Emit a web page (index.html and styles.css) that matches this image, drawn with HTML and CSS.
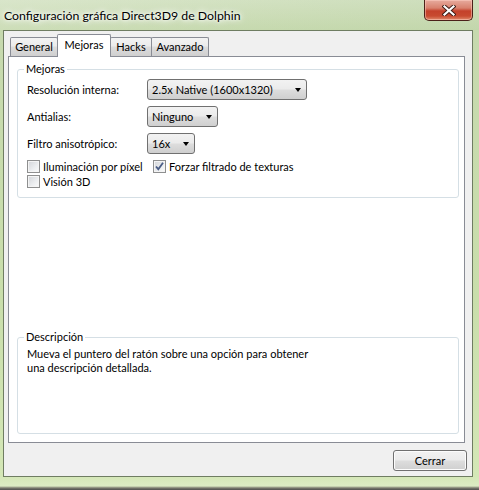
FILE: index.html
```html
<!DOCTYPE html>
<html lang="es">
<head>
<meta charset="utf-8">
<title>Configuración gráfica Direct3D9 de Dolphin</title>
<link rel="stylesheet" href="styles.css">
</head>
<body>
<div class="window">
  <div class="titlebar">
    <span class="title">Configuración gráfica Direct3D9 de Dolphin</span>
    <div class="close">
      <svg width="14" height="11" viewBox="0 0 14 11">
        <path d="M2.5 1.5 L11.5 9.5 M11.5 1.5 L2.5 9.5" stroke="#3a1a14" stroke-width="4" stroke-linecap="square" fill="none"/>
        <path d="M2.5 1.5 L11.5 9.5 M11.5 1.5 L2.5 9.5" stroke="#ffffff" stroke-width="2.2" stroke-linecap="square" fill="none"/>
      </svg>
    </div>
  </div>
  <div class="client">
    <div class="tabs">
      <div class="tab tab-general">General</div>
      <div class="tab tab-mejoras active">Mejoras</div>
      <div class="tab tab-hacks">Hacks</div>
      <div class="tab tab-avanzado">Avanzado</div>
    </div>
    <div class="panel">
      <fieldset class="group group-main">
        <legend>Mejoras</legend>
        <div class="row">
          <span class="label">Resolución interna:</span>
          <div class="combo combo-wide"><span>2.5x Native (1600x1320)</span><i class="arrow"></i></div>
        </div>
        <div class="row">
          <span class="label">Antialias:</span>
          <div class="combo combo-mid"><span>Ninguno</span><i class="arrow"></i></div>
        </div>
        <div class="row">
          <span class="label">Filtro anisotrópico:</span>
          <div class="combo combo-small"><span>16x</span><i class="arrow"></i></div>
        </div>
        <div class="checks">
          <div class="check check-first"><span class="box"></span><span>Iluminación por píxel</span></div>
          <div class="check"><span class="box">
            <svg class="tick" width="11" height="11" viewBox="0 0 11 11"><path d="M2 5.5 L4.3 8.2 L9 1.8" stroke="#4a5d86" stroke-width="1.8" fill="none"/></svg>
          </span><span>Forzar filtrado de texturas</span></div>
        </div>
        <div class="checks">
          <div class="check"><span class="box"></span><span>Visión 3D</span></div>
        </div>
      </fieldset>
      <fieldset class="group group-desc">
        <legend>Descripción</legend>
        <p class="desc">Mueva el puntero del ratón sobre una opción para obtener<br>una descripción detallada.</p>
      </fieldset>
    </div>
    <div class="footer">
      <div class="btn">Cerrar</div>
    </div>
  </div>
</div>
</body>
</html>
```
FILE: styles.css
```css
* { box-sizing: border-box; }
html, body { margin: 0; padding: 0; }
body {
  font-family: Lato, "Open Sans", sans-serif;
  font-size: 11px;
  color: #000;
  background: #5a5a5a;
}
.window {
  width: 479px;
  height: 490px;
  display: flex;
  flex-direction: column;
  background: linear-gradient(to bottom, #d4e2c3 0px, #c6d9ae 30px, #c9deab 300px, #d4e7b6 476px, #dcebc4 486px, #7a7a6e 488px, #4e4e4e 490px);
}
.titlebar {
  height: 30px;
  display: flex;
  align-items: flex-start;
  background: linear-gradient(to right, rgba(255,255,255,0.12), rgba(200,220,180,0.1) 50%, rgba(180,205,160,0.2));
}
.title {
  margin: 8px 0 0 4px;
  font-size: 12.3px;
  line-height: 16px;
  text-shadow: 0 0 6px #fff, 0 0 10px #fff, 0 0 3px #fff;
}
.close {
  margin-left: auto;
  margin-right: 6px;
  width: 49px;
  height: 21px;
  border: 1px solid #4b2019;
  border-top: none;
  border-radius: 0 0 5px 5px;
  background: linear-gradient(to bottom, #e7ab9e 0%, #d8816e 40%, #c4412b 55%, #c84a30 80%, #e08a6c 100%);
  box-shadow: inset 0 0 0 1px rgba(255,210,200,0.5);
  display: flex;
  align-items: center;
  justify-content: center;
}
.client {
  margin-left: 3px;
  width: 470px;
  height: 447px;
  border: 1px solid #6f7d62;
  background: #f0f0f0;
  display: flex;
  flex-direction: column;
}
.tabs {
  display: flex;
  align-items: flex-end;
  height: 25px;
  padding: 3px 0 0 6px;
}
.tab {
  height: 19px;
  border: 1px solid #898c95;
  border-bottom: none;
  border-radius: 2px 2px 0 0;
  background: linear-gradient(to bottom, #f3f3f3 0%, #ebebeb 45%, #dddddd 50%, #cfcfcf 100%);
  text-align: center;
  line-height: 18px;
  margin-left: -1px;
}
.tab:first-child { margin-left: 0; }
.tab.active {
  height: 23px;
  margin-bottom: -1px;
  background: #fff;
  position: relative;
  z-index: 1;
  line-height: 19px;
}
.tab-general { width: 48px; }
.tab-mejoras { width: 54px; }
.tab-hacks { width: 42px; }
.tab-avanzado { width: 58px; }
.panel {
  margin-left: 4px;
  width: 457px;
  height: 387px;
  border: 1px solid #898c95;
  background: #fff;
  display: flex;
  flex-direction: column;
  padding: 5px 5px 8px 8px;
}
.group {
  margin: 0;
  min-width: 0;
  border: 1px solid #d5dfe5;
  border-radius: 3px;
  padding: 3px 0 8px 9px;
}
.group legend {
  padding: 0 2px;
  margin-left: -3px;
  line-height: 14px;
}
.row {
  display: flex;
  align-items: center;
  height: 21px;
  margin-bottom: 6px;
}
.label { width: 120px; }
.combo {
  height: 21px;
  border: 1px solid #707070;
  border-radius: 3px;
  background: linear-gradient(to bottom, #f2f2f2 0%, #ebebeb 48%, #dddddd 52%, #cfcfcf 100%);
  display: flex;
  align-items: center;
  padding: 0 5px 0 4px;
}
.combo span { flex: 1; white-space: nowrap; }
.combo-wide { width: 160px; }
.combo-mid { width: 71px; }
.combo-small { width: 48px; }
.arrow {
  width: 0;
  height: 0;
  border-left: 3.5px solid transparent;
  border-right: 3.5px solid transparent;
  border-top: 4px solid #000;
}
.checks {
  display: flex;
  align-items: center;
  height: 15px;
}
.row + .checks { margin-top: -1px; }
.check {
  display: flex;
  align-items: center;
  white-space: nowrap;
}
.check-first { width: 126px; }
.box {
  width: 13px;
  height: 13px;
  border: 1px solid #8e8f8f;
  background: linear-gradient(135deg, #d2d4d8 0%, #eceef0 60%, #fbfbfb 100%);
  box-shadow: inset 0 0 0 1px #f4f4f4;
  margin-right: 3px;
  position: relative;
}
.tick { position: absolute; left: 0; top: 0; }
.group-desc {
  margin-top: auto;
  height: 104px;
  padding: 3px 0 0 9px;
}
.desc {
  margin: 0;
  line-height: 14px;
}
.footer {
  display: flex;
  justify-content: flex-end;
  padding: 7px 5px 0 0;
}
.btn {
  width: 74px;
  height: 21px;
  border: 1px solid #707070;
  border-radius: 3px;
  background: linear-gradient(to bottom, #f2f2f2 0%, #ebebeb 48%, #dddddd 52%, #cfcfcf 100%);
  box-shadow: inset 0 0 0 1px #fcfcfc;
  text-align: center;
  line-height: 19px;
}
```
